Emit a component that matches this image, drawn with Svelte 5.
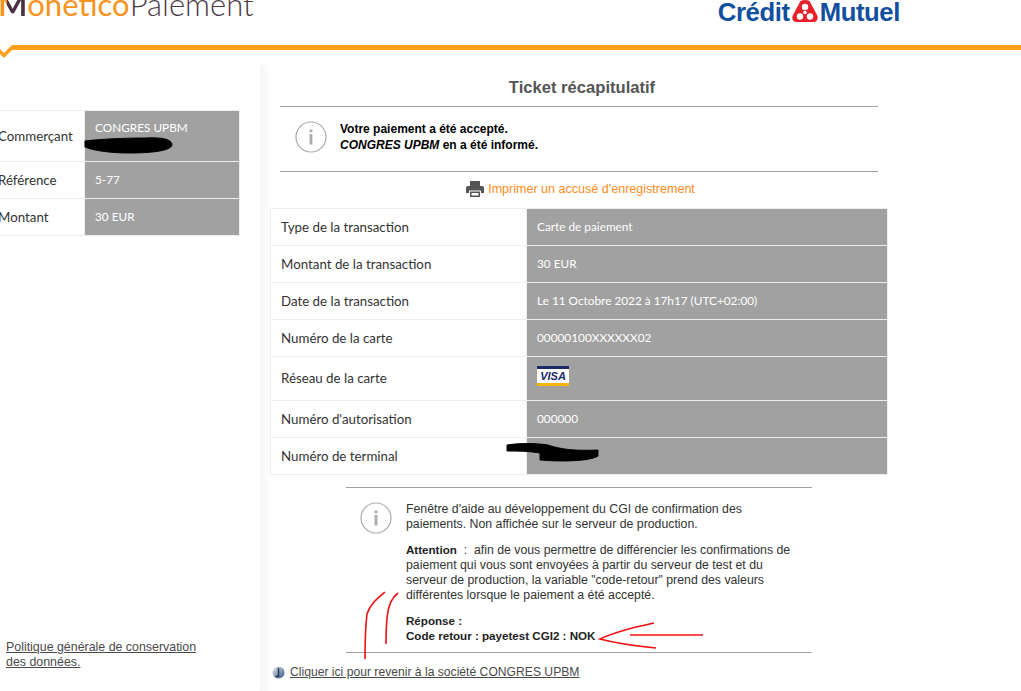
<script>
    const merchantRows = [
        { label: "Référence", value: "5-77" },
        { label: "Montant", value: "30 EUR" }
    ];
    const rows = [
        { label: "Type de la transaction", value: "Carte de paiement" },
        { label: "Montant de la transaction", value: "30 EUR" },
        { label: "Date de la transaction", value: "Le 11 Octobre 2022 à 17h17 (UTC+02:00)" },
        { label: "Numéro de la carte", value: "00000100XXXXXX02" },
        { label: "Réseau de la carte", visa: true },
        { label: "Numéro d'autorisation", value: "000000" },
        { label: "Numéro de terminal", value: "" }
    ];
</script>

{#snippet infoIcon()}
    <svg class="info" width="32" height="32" viewBox="0 0 32 32">
        <circle cx="16" cy="16" r="15" fill="#fff" stroke="#aaa" stroke-width="1.2" />
        <rect x="14.6" y="8.5" width="2.8" height="2.8" fill="#aaa" />
        <rect x="14.6" y="13" width="2.8" height="10.5" fill="#aaa" />
    </svg>
{/snippet}

<div class="page">
    <header>
        <div class="monetico"><span class="m">M</span><span class="oneti">onetico</span><span class="pay">Paiement</span></div>
        <div class="cm">
            <span>Crédit</span>
            <svg width="26" height="24" viewBox="0 0 26 24">
                <path d="M8.5 1 Q13 -1 17.5 1 L25.5 16 Q26.5 21 22 22 L4 22 Q-0.5 21 0.5 16 Z" fill="#e8202a" />
                <circle cx="13" cy="7" r="3.2" fill="#fff" />
                <circle cx="8" cy="16.5" r="3.2" fill="#fff" />
                <circle cx="18" cy="16.5" r="3.2" fill="#fff" />
                <circle cx="13" cy="12.5" r="1.8" fill="#fff" />
            </svg>
            <span>Mutuel</span>
        </div>
    </header>
    <div class="bar"></div>
    <svg class="tick" width="14" height="14" viewBox="0 0 14 14">
        <path d="M0 4 L4 8 L12 0 L14 0 L14 5 L12 5 L4 13 L0 9 Z" fill="#ff9f1c" />
    </svg>

    <main>
        <aside>
            <table class="merchant">
                <tbody>
                    <tr class="tall">
                        <th>Commerçant</th>
                        <td>CONGRES UPBM</td>
                    </tr>
                    {#each merchantRows as row}
                        <tr>
                            <th>{row.label}</th>
                            <td>{row.value}</td>
                        </tr>
                    {/each}
                </tbody>
            </table>
            <a class="policy" href="#top">Politique générale de conservation<br />des données.</a>
        </aside>

        <section>
            <h1>Ticket récapitulatif</h1>
            <div class="notice">
                {@render infoIcon()}
                <p><b>Votre paiement a été accepté.<br /><i>CONGRES UPBM</i> en a été informé.</b></p>
            </div>
            <a class="print" href="#top">
                <svg width="18" height="16" viewBox="0 0 18 16">
                    <path d="M4 0 H14 V5 H4 Z" fill="#555" />
                    <path d="M2 5 H16 Q18 5 18 7 V12 H15 V9.5 H3 V12 H0 V7 Q0 5 2 5 Z" fill="#555" />
                    <path d="M4 10.5 H14 V16 H4 Z" fill="#555" />
                    <path d="M5.5 12 H12.5 V14.5 H5.5 Z" fill="#fff" />
                </svg>
                Imprimer un accusé d'enregistrement
            </a>
            <table class="details">
                <tbody>
                    {#each rows as row}
                        <tr class:visa-row={row.visa}>
                            <th>{row.label}</th>
                            <td>
                                {#if row.visa}
                                    <div class="visa"><span>VISA</span></div>
                                {:else}
                                    {row.value}
                                {/if}
                            </td>
                        </tr>
                    {/each}
                </tbody>
            </table>
            <div class="help">
                {@render infoIcon()}
                <div class="help-text">
                    <p>Fenêtre d'aide au développement du CGI de confirmation des paiements. Non affichée sur le serveur de production.</p>
                    <p><b>Attention</b> &nbsp;:&nbsp; afin de vous permettre de différencier les confirmations de paiement qui vous sont envoyées à partir du serveur de test et du serveur de production, la variable "code-retour" prend des valeurs différentes lorsque le paiement a été accepté.</p>
                    <p><b>Réponse :<br />Code retour : payetest CGI2 : NOK</b></p>
                </div>
            </div>
            <div class="back">
                <svg width="13" height="13" viewBox="0 0 13 13">
                    <defs>
                        <linearGradient id="ball" x1="0" y1="0" x2="1" y2="1">
                            <stop offset="0" stop-color="#eef0f5" />
                            <stop offset="1" stop-color="#2f4f86" />
                        </linearGradient>
                    </defs>
                    <circle cx="6.5" cy="6.5" r="6" fill="url(#ball)" />
                    <path d="M6.5 2 V10 L3.5 11" stroke="#234" stroke-width="1.4" fill="none" />
                </svg>
                <a href="#top">Cliquer ici pour revenir à la société CONGRES UPBM</a>
            </div>
        </section>
    </main>

    <!-- marques ajoutées à la main par-dessus la capture -->
    <svg class="marks" width="1021" height="691" viewBox="0 0 1021 691">
        <g fill="#000" stroke="#000" stroke-linejoin="round">
            <path d="M85 141 C100 139 125 138 145 138 C165 137 172 140 172 145 C171 151 150 153 130 153 C112 153 95 151 85 147 Z" />
            <path d="M507 445 C520 443 535 443 548 445 C560 449 572 451 598 450 L598 456 C590 461 565 462 540 460 L540 453 C528 451 518 451 507 451 Z" />
        </g>
        <g fill="none" stroke="#f01010" stroke-width="1.6">
            <path d="M385 592 C378 598 370 604 367 614 C365 630 365 645 365 659" />
            <path d="M398 593 C391 598 388 606 387 618 C386 628 386 635 386 644" />
            <path d="M654 623 C635 627 615 632 600 639 C615 643 635 646 656 648" />
            <path d="M630 635 H703" />
        </g>
    </svg>
</div>

<style>
    :global(body) {
        background: #fff;
        overflow: hidden;
    }

    .page {
        position: relative;
        width: 1021px;
        height: 691px;
        overflow: hidden;
        font-family: "Liberation Sans", Arial, sans-serif;
    }

    header {
        height: 45px;
        display: flex;
        justify-content: space-between;
        overflow: hidden;
    }

    .monetico {
        margin-top: -16px;
        margin-left: -2px;
        font-family: Lato, sans-serif;
        font-size: 31px;
        line-height: 40px;
        font-weight: 300;
        white-space: nowrap;
    }

    .m {
        color: transparent;
        background: linear-gradient(to right, #f7941d 32%, #4a3044 32%);
        -webkit-background-clip: text;
        background-clip: text;
        font-weight: 700;
    }

    .oneti {
        color: #f7941d;
        font-weight: 400;
    }

    .pay {
        color: #4a3a45;
        font-weight: 300;
    }

    .cm {
        margin: 0 121px 0 0;
        height: 24px;
        display: flex;
        align-items: center;
        gap: 2px;
        color: #124f9f;
        font-size: 25.7px;
        font-weight: 700;
        letter-spacing: -0.4px;
    }

    .bar {
        height: 5px;
        margin-left: 12px;
        background: #ff9f1c;
    }

    .tick {
        position: absolute;
        left: 0;
        top: 45px;
    }

    main {
        display: flex;
        height: 641px;
    }

    aside {
        width: 260px;
        flex: none;
        padding-top: 60px;
    }

    table {
        border-collapse: collapse;
        font-family: Lato, sans-serif;
        font-size: 13.3px;
    }

    th {
        font-weight: 400;
        text-align: left;
        color: #333;
    }

    td {
        background: #a1a1a1;
        color: #fff;
        vertical-align: middle;
    }

    tr {
        border: 1px solid #eee;
    }

    .merchant {
        width: 252px;
        margin-left: -12px;
        table-layout: fixed;
    }

    .merchant tr {
        height: 37px;
    }

    .merchant tr.tall {
        height: 51px;
    }

    .merchant th {
        width: 86px;
        padding: 0 0 0 9px;
    }

    .merchant td {
        padding: 0 10px 2px;
        font-size: 11.8px;
        border-left: 1px solid #eee;
    }

    .merchant .tall td {
        vertical-align: top;
        padding-top: 9px;
    }

    .policy {
        display: block;
        margin: 404px 0 0 6px;
        color: #4a4a4a;
        font: 12.4px/15px "Liberation Sans", Arial, sans-serif;
    }

    section {
        flex: 1;
        margin-top: 15px;
        padding: 0 0 0 10px;
        background: linear-gradient(to right, #f6f6f6, #fff 12px);
    }

    h1 {
        width: 598px;
        margin: 0 0 0 10px;
        height: 42px;
        box-sizing: border-box;
        padding: 14px 0 0 6px;
        border-bottom: 1px solid #a1a1a1;
        text-align: center;
        color: #555;
        font-size: 16.6px;
        line-height: 18px;
    }

    .notice {
        margin-left: 10px;
        width: 583px;
        height: 60px;
        padding: 0 0 4px 15px;
        border-bottom: 1px solid #a1a1a1;
        display: flex;
        align-items: center;
        gap: 13px;
    }

    .notice p {
        margin: 0;
        color: #000;
        font-size: 12px;
        line-height: 16px;
    }

    .print {
        width: 601px;
        height: 36px;
        box-sizing: border-box;
        padding-bottom: 3px;
        display: flex;
        align-items: center;
        justify-content: center;
        gap: 4px;
        color: #ff8c1a;
        font-size: 12.55px;
        text-decoration: none;
        margin-left: 10px;
    }

    .details {
        width: 618px;
        table-layout: fixed;
    }

    .details tr {
        height: 37px;
    }

    .details tr.visa-row {
        height: 44px;
    }

    .details th {
        width: 245px;
        padding: 0 0 0 10px;
    }

    .details td {
        padding: 0 10px 2px;
        font-size: 11.8px;
        border-left: 1px solid #eee;
    }

    .details .visa-row th {
        padding-bottom: 2px;
    }

    .visa {
        width: 32px;
        height: 20px;
        margin-bottom: 3px;
        background: #fff;
        border-top: 3px solid #1a2a6c;
        border-bottom: 3px solid #f7b600;
        box-sizing: border-box;
        text-align: center;
    }

    .visa span {
        display: block;
        color: #1a2a6c;
        font: italic 700 11px/14px "Liberation Sans", Arial, sans-serif;
    }

    .help {
        width: 466px;
        height: 166px;
        margin: 12px 0 0 76px;
        border-top: 1px solid #a1a1a1;
        border-bottom: 1px solid #a1a1a1;
        display: flex;
        box-sizing: border-box;
        padding: 14px 0 0 14px;
        gap: 14px;
        color: #333;
        font-size: 12.3px;
        line-height: 15px;
    }

    .help .info {
        flex: none;
    }

    .help-text {
        width: 387px;
    }

    .help-text p {
        margin: 0 0 11px;
    }

    .help-text b {
        color: #222;
        font-size: 11.6px;
        line-height: 1;
    }

    .back {
        display: flex;
        align-items: center;
        gap: 5px;
        margin: 12px 0 0 2px;
        font-size: 12.15px;
    }

    .back a {
        color: #4a4a4a;
    }

    .marks {
        position: absolute;
        left: 0;
        top: 0;
        pointer-events: none;
    }
</style>
